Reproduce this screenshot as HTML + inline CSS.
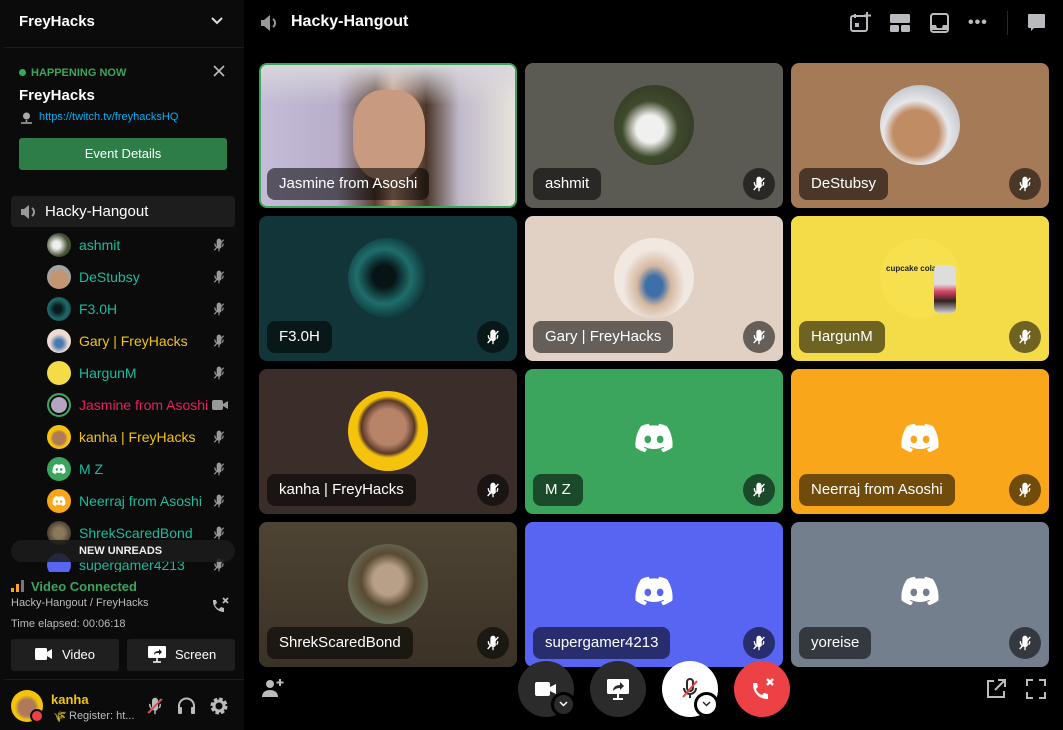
<!DOCTYPE html>
<html><head><meta charset="utf-8"><style>
*{box-sizing:border-box;margin:0;padding:0}
body{width:1063px;height:730px;background:#000;font-family:"Liberation Sans",sans-serif;color:#dcddde;position:relative;overflow:hidden}
.sb{position:absolute;left:0;top:0;width:244px;height:730px;background:#0b0b0b}
.abs{position:absolute}
.row{position:absolute;left:47px;height:24px;width:190px;font-size:14px;line-height:24px}
.row .av{position:absolute;left:0;top:0;width:24px;height:24px;border-radius:50%}
.row .nm{position:absolute;left:32px;top:0;white-space:nowrap}
.row svg{position:absolute;left:165px;top:5px}
.tile{position:absolute;width:258px;height:145px;border-radius:8px;overflow:hidden}
.lbl{position:absolute;left:8px;bottom:8px;height:32px;padding:0 12px;border-radius:8px;background:rgba(0,0,0,.55);color:#fff;font-size:15px;line-height:32px;white-space:nowrap}
.mute{position:absolute;right:8px;bottom:8px;width:32px;height:32px;border-radius:50%;background:rgba(0,0,0,.55)}
.mute svg{position:absolute;left:8px;top:8px}
.cav{position:absolute;left:89px;top:22px;width:80px;height:80px;border-radius:50%}
.dlogo{position:absolute;left:104px;top:53px}
.btn{position:absolute;width:56px;height:56px;border-radius:50%}
</style></head><body>
<svg width="0" height="0" style="position:absolute"><defs>
<symbol id="mm" viewBox="0 0 24 24"><path d="M9 5a3 3 0 0 1 6 0v5L9 16z M15 13v-1l-4 5a3 3 0 0 0 4-4z M19 10a7 7 0 0 1-1 4 M5 10a7 7 0 0 0 2 5 M12 18v4" stroke="currentColor" stroke-width="2" fill="currentColor" stroke-linecap="round"/><path d="M20 3L4 21" stroke="currentColor" stroke-width="2"/></symbol>
<symbol id="dc" viewBox="0 0 24 24"><path fill="#fff" d="M19.73 4.87a18.2 18.2 0 0 0-4.6-1.44c-.21.4-.4.8-.58 1.21-1.69-.25-3.4-.25-5.1 0-.18-.41-.37-.82-.59-1.2-1.6.27-3.14.75-4.6 1.43A19.04 19.04 0 0 0 .96 17.7a18.43 18.43 0 0 0 5.63 2.87c.46-.62.86-1.28 1.2-1.98-.65-.25-1.29-.55-1.9-.92.17-.12.32-.24.47-.37 3.58 1.7 7.7 1.7 11.28 0l.46.37c-.6.36-1.25.67-1.9.92.35.7.75 1.350 1.2 1.98 2.03-.63 3.94-1.6 5.64-2.87.47-4.87-.78-9.09-3.3-12.83ZM8.3 15.12c-1.1 0-2-1.02-2-2.27 0-1.24.88-2.26 2-2.26s2.02 1.02 2 2.26c0 1.25-.89 2.27-2 2.27Zm7.4 0c-1.1 0-2-1.02-2-2.27 0-1.24.88-2.26 2-2.260s2.02 1.02 2 2.26c0 1.25-.88 2.27-2 2.27Z"/></symbol>
</defs></svg>

<div class="sb">
 <div class="abs" style="left:19px;top:13px;font-size:15px;font-weight:bold;color:#fff">FreyHacks</div>
 <svg class="abs" style="left:210px;top:16px" width="14" height="10" viewBox="0 0 14 10"><path d="M2 2l5 5 5-5" stroke="#ddd" stroke-width="2" fill="none"/></svg>
 <div class="abs" style="left:4px;top:47px;width:240px;height:1px;background:#1c1c1c"></div>
 <div class="abs" style="left:19px;top:69px;width:7px;height:7px;border-radius:50%;background:#3ba55d"></div>
 <div class="abs" style="left:31px;top:67px;font-size:11px;font-weight:bold;color:#3ba55d">HAPPENING NOW</div>
 <svg class="abs" style="left:213px;top:65px" width="12" height="12" viewBox="0 0 12 12"><path d="M1 1l10 10M11 1L1 11" stroke="#bbb" stroke-width="1.6"/></svg>
 <div class="abs" style="left:19px;top:87px;font-size:15px;font-weight:bold;color:#fff">FreyHacks</div>
 <svg class="abs" style="left:20px;top:111px" width="13" height="13" viewBox="0 0 13 13"><circle cx="6.5" cy="5" r="3.5" fill="#aaa"/><path d="M6.5 9v2M1 12h11" stroke="#aaa" stroke-width="1.5"/></svg>
 <div class="abs" style="left:39px;top:111px;font-size:11px;color:#00aff4">https://twitch.tv/freyhacksHQ</div>
 <div class="abs" style="left:19px;top:138px;width:208px;height:32px;border-radius:3px;background:#2d7d46;color:#fff;font-size:13px;text-align:center;line-height:32px">Event Details</div>
 <div class="abs" style="left:11px;top:196px;width:224px;height:31px;border-radius:4px;background:#1d1d1d"></div>
 <svg class="abs" style="left:20px;top:204px" width="18" height="16" viewBox="0 0 18 16"><path d="M1 5h3l5-4v14l-5-4H1z" fill="#999"/><path d="M12 4a5 5 0 0 1 0 8" stroke="#999" stroke-width="2" fill="none"/></svg>
 <div class="abs" style="left:45px;top:203px;font-size:15px;color:#fff">Hacky-Hangout</div>

 <div class="row" style="top:233px"><div class="av" style="background:radial-gradient(circle at 40% 50%,#eee 20%,#445033 60%)"></div><div class="nm" style="color:#1abc9c">ashmit</div><svg width="14" height="14" style="color:#999"><use href="#mm"/></svg></div>
 <div class="row" style="top:265px"><div class="av" style="background:radial-gradient(circle at 50% 60%,#c59470 40%,#9aa 70%)"></div><div class="nm" style="color:#1abc9c">DeStubsy</div><svg width="14" height="14" style="color:#999"><use href="#mm"/></svg></div>
 <div class="row" style="top:297px"><div class="av" style="background:radial-gradient(circle at 45% 50%,#0a1a1c 20%,#1e6b6a 55%,#0b2b2e)"></div><div class="nm" style="color:#1abc9c">F3.0H</div><svg width="14" height="14" style="color:#999"><use href="#mm"/></svg></div>
 <div class="row" style="top:329px"><div class="av" style="background:radial-gradient(circle at 50% 60%,#4b79b0 20%,#eedbd0 50%)"></div><div class="nm" style="color:#f1c40f">Gary | FreyHacks</div><svg width="14" height="14" style="color:#999"><use href="#mm"/></svg></div>
 <div class="row" style="top:361px"><div class="av" style="background:#f4dc48"></div><div class="nm" style="color:#1abc9c">HargunM</div><svg width="14" height="14" style="color:#999"><use href="#mm"/></svg></div>
 <div class="row" style="top:393px"><div class="av" style="background:#b3a6c0;border:2px solid #3ba55d;box-shadow:inset 0 0 0 2px #0b0b0b"></div><div class="nm" style="color:#e91e63">Jasmine from Asoshi</div><svg width="16" height="12" viewBox="0 0 16 12" style="left:165px;top:6px"><rect x="0" y="1" width="11" height="10" rx="2" fill="#999"/><path d="M11 5l5-3v8l-5-3z" fill="#999"/></svg></div>
 <div class="row" style="top:425px"><div class="av" style="background:radial-gradient(circle at 50% 55%,#b07a58 35%,#f5c30c 50%)"></div><div class="nm" style="color:#f1c40f">kanha | FreyHacks</div><svg width="14" height="14" style="color:#999"><use href="#mm"/></svg></div>
 <div class="row" style="top:457px"><div class="av" style="background:#3ba55d"><svg width="14" height="14" style="left:5px;top:5px"><use href="#dc"/></svg></div><div class="nm" style="color:#1abc9c">M Z</div><svg width="14" height="14" style="color:#999"><use href="#mm"/></svg></div>
 <div class="row" style="top:489px"><div class="av" style="background:#faa61a"><svg width="14" height="14" style="left:5px;top:5px"><use href="#dc"/></svg></div><div class="nm" style="color:#1abc9c">Neerraj from Asoshi</div><svg width="14" height="14" style="color:#999"><use href="#mm"/></svg></div>
 <div class="row" style="top:521px"><div class="av" style="background:radial-gradient(circle,#8a7a5a 30%,#4a4030 70%)"></div><div class="nm" style="color:#1abc9c">ShrekScaredBond</div><svg width="14" height="14" style="color:#999"><use href="#mm"/></svg></div>
 <div class="row" style="top:553px;height:20px;overflow:hidden"><div class="av" style="background:#5865f2"></div><div class="nm" style="color:#1abc9c">supergamer4213</div><svg width="14" height="14" style="color:#999"><use href="#mm"/></svg></div>
 <div class="abs" style="left:11px;top:540px;width:224px;height:22px;border-radius:11px;background:rgba(28,28,28,.85);font-size:11px;font-weight:bold;color:#eee;line-height:22px;padding-left:68px">NEW UNREADS</div>
 <div class="abs" style="left:0;top:572px;width:244px;height:158px;background:#0b0b0b"></div>
 <svg class="abs" style="left:11px;top:580px" width="14" height="12" viewBox="0 0 14 12"><rect x="0" y="8" width="3" height="4" fill="#faa61a"/><rect x="5" y="4" width="3" height="8" fill="#faa61a"/><rect x="10" y="0" width="3" height="12" fill="#777"/></svg>
 <div class="abs" style="left:31px;top:579px;font-size:13px;font-weight:bold;color:#3ba55d">Video Connected</div>
 <div class="abs" style="left:11px;top:597px;font-size:11px;color:#b9bbbe">Hacky-Hangout / FreyHacks</div>
 <svg class="abs" style="left:210px;top:595px" width="20" height="20" viewBox="0 0 20 20"><path d="M3 6c0 6 5 11 11 11v-4l-3-1-2 2c-2-1-3-2-4-4l2-2-1-3H3z" fill="#bbb"/><path d="M13 3l5 5M18 3l-5 5" stroke="#bbb" stroke-width="1.8"/></svg>
 <div class="abs" style="left:11px;top:618px;font-size:11px;color:#b9bbbe">Time elapsed: 00:06:18</div>
 <div class="abs" style="left:11px;top:639px;width:108px;height:32px;border-radius:3px;background:#1f1f1f"></div>
 <svg class="abs" style="left:35px;top:647px" width="18" height="14" viewBox="0 0 18 14"><rect x="0" y="1" width="12" height="12" rx="1.5" fill="#fff"/><path d="M12 5l5-3v10l-5-3z" fill="#fff"/></svg>
 <div class="abs" style="left:62px;top:647px;font-size:13px;color:#fff">Video</div>
 <div class="abs" style="left:127px;top:639px;width:108px;height:32px;border-radius:3px;background:#1f1f1f"></div>
 <svg class="abs" style="left:148px;top:645px" width="18" height="18" viewBox="0 0 18 18"><rect x="0" y="1" width="18" height="12" rx="1" fill="#fff"/><path d="M9 13v4M5 17h8" stroke="#fff" stroke-width="1.5"/><path d="M6 10c0-3 2-4 5-4V4l3 3-3 3V8c-2 0-4 0-5 2z" fill="#1f1f1f"/></svg>
 <div class="abs" style="left:175px;top:647px;font-size:13px;color:#fff">Screen</div>
 <div class="abs" style="left:4px;top:679px;width:240px;height:1px;background:#1c1c1c"></div>
 <div class="abs" style="left:11px;top:690px;width:32px;height:32px;border-radius:50%;background:radial-gradient(circle at 50% 55%,#b07a58 35%,#f5c30c 52%)"></div>
 <div class="abs" style="left:30px;top:709px;width:14px;height:14px;border-radius:50%;background:#ed4245;border:2px solid #0b0b0b"></div>
 <div class="abs" style="left:51px;top:692px;font-size:13px;font-weight:bold;color:#f1c40f">kanha</div>
 <div class="abs" style="left:53px;top:710px;font-size:11px;color:#7ea04a">🌾</div>
 <div class="abs" style="left:69px;top:710px;font-size:11px;color:#b9bbbe">Register: ht...</div>
 <svg class="abs" style="left:146px;top:697px" width="18" height="18" style="color:#bbb"><use href="#mm" style="color:#bbb"/></svg>
 <svg class="abs" style="left:146px;top:697px" width="18" height="18" viewBox="0 0 18 18"><path d="M16 2L2 16" stroke="#ed4245" stroke-width="1.8"/></svg>
 <svg class="abs" style="left:177px;top:697px" width="19" height="18" viewBox="0 0 19 18"><path d="M2 14V9a7.5 7.5 0 0 1 15 0v5" stroke="#bbb" stroke-width="2" fill="none"/><rect x="1" y="10" width="4" height="7" rx="1" fill="#bbb"/><rect x="14" y="10" width="4" height="7" rx="1" fill="#bbb"/></svg>
 <svg class="abs" style="left:209px;top:696px" width="20" height="20" viewBox="0 0 20 20"><circle cx="10" cy="10" r="6.5" fill="none" stroke="#bbb" stroke-width="4" stroke-dasharray="3.2 1.9"/><circle cx="10" cy="10" r="5" fill="none" stroke="#bbb" stroke-width="3"/></svg>
</div>

<!-- header -->
<svg class="abs" style="left:260px;top:14px" width="20" height="18" viewBox="0 0 20 18"><path d="M1 6h3l6-5v16l-6-5H1z" fill="#999"/><path d="M13 5a5 5 0 0 1 0 8" stroke="#999" stroke-width="2" fill="none"/></svg>
<div class="abs" style="left:291px;top:13px;font-size:16px;font-weight:bold;color:#fff">Hacky-Hangout</div>
<svg class="abs" style="left:850px;top:12px" width="22" height="22" viewBox="0 0 22 22"><rect x="1" y="4" width="16" height="15" rx="2" fill="none" stroke="#b9bbbe" stroke-width="2"/><rect x="5" y="11" width="4" height="4" fill="#b9bbbe"/><path d="M5 2v4M17 0v7M14 3.5h7" stroke="#b9bbbe" stroke-width="2"/></svg>
<svg class="abs" style="left:890px;top:14px" width="20" height="18" viewBox="0 0 20 18"><rect x="0" y="0" width="20" height="9" rx="1.5" fill="#b9bbbe"/><rect x="0" y="11" width="9" height="7" rx="1.5" fill="#b9bbbe"/><rect x="11" y="11" width="9" height="7" rx="1.5" fill="#b9bbbe"/></svg>
<svg class="abs" style="left:930px;top:13px" width="19" height="20" viewBox="0 0 19 20"><rect x="1" y="1" width="17" height="18" rx="2.5" fill="none" stroke="#b9bbbe" stroke-width="2"/><path d="M1 12h5l1 3h5l1-3h5v5H1z" fill="#b9bbbe"/></svg>
<div class="abs" style="left:968px;top:14px;font-size:16px;color:#b9bbbe;letter-spacing:1px;font-weight:bold">•••</div>
<div class="abs" style="left:1007px;top:11px;width:1px;height:24px;background:#2a2a2a"></div>
<svg class="abs" style="left:1027px;top:13px" width="19" height="19" viewBox="0 0 19 19"><path d="M2 1h15a1 1 0 0 1 1 1v12a1 1 0 0 1-1 1H7l-3 3v-3H2a1 1 0 0 1-1-1V2a1 1 0 0 1 1-1z" fill="#b9bbbe"/></svg>

<!-- tiles row1 -->
<div class="tile" style="left:259px;top:63px;background:linear-gradient(90deg,#c4bcd8 0%,#b8aec9 30%,#5a3d30 45%,#c89c80 52%,#4a3528 65%,#c0b8c8 78%,#e8e4dc 100%);border:2px solid #3ba55d">
 <div class="abs" style="left:0;top:0;width:100%;height:40px;background:linear-gradient(#d8d6dc,rgba(216,214,220,0))"></div>
 <div class="abs" style="left:92px;top:25px;width:72px;height:90px;border-radius:40%;background:#c89a80"></div>
 <div class="lbl" style="left:6px;bottom:6px">Jasmine from Asoshi</div></div>
<div class="tile" style="left:525px;top:63px;background:#5b5a53"><div class="cav" style="background:radial-gradient(circle at 45% 55%,#f0f0ee 22%,#3f4a2c 45%,#2b3020)"></div><div class="lbl">ashmit</div><div class="mute"><svg width="16" height="16" style="color:#fff"><use href="#mm"/></svg></div></div>
<div class="tile" style="left:791px;top:63px;background:#a57a57"><div class="cav" style="background:radial-gradient(circle at 45% 60%,#c08c64 35%,#e7e7ea 50%,#9aa0a8)"></div><div class="lbl">DeStubsy</div><div class="mute"><svg width="16" height="16" style="color:#fff"><use href="#mm"/></svg></div></div>
<!-- row2 -->
<div class="tile" style="left:259px;top:216px;background:#123539"><div class="cav" style="background:radial-gradient(circle at 45% 48%,#061416 18%,#1f6e6c 45%,#0b2c30 75%)"></div><div class="lbl">F3.0H</div><div class="mute"><svg width="16" height="16" style="color:#fff"><use href="#mm"/></svg></div></div>
<div class="tile" style="left:525px;top:216px;background:#e1d1c5"><div class="cav" style="background:radial-gradient(ellipse at 50% 60%,#3f6fa8 15%,#d4b8a0 30%,#f2e8e2 55%)"></div><div class="lbl">Gary | FreyHacks</div><div class="mute"><svg width="16" height="16" style="color:#fff"><use href="#mm"/></svg></div></div>
<div class="tile" style="left:791px;top:216px;background:#f4db48"><div class="cav" style="background:#f7e04e"></div><div class="abs" style="left:95px;top:48px;font-size:8px;font-weight:bold;color:#222">cupcake cola</div><div class="abs" style="left:143px;top:49px;width:22px;height:48px;border-radius:5px;background:linear-gradient(#ddd 40%,#d46 55%,#322 75%,#ccc)"></div><div class="lbl">HargunM</div><div class="mute"><svg width="16" height="16" style="color:#fff"><use href="#mm"/></svg></div></div>
<!-- row3 -->
<div class="tile" style="left:259px;top:369px;background:#3b2d29"><div class="cav" style="background:radial-gradient(circle at 50% 45%,#b88468 30%,#5a3a2a 45%,#f5c30c 52%)"></div><div class="lbl">kanha | FreyHacks</div><div class="mute"><svg width="16" height="16" style="color:#fff"><use href="#mm"/></svg></div></div>
<div class="tile" style="left:525px;top:369px;background:#3ba55d"><svg class="dlogo" width="50" height="40" viewBox="0 0 24 24" style="left:104px;top:49px"><use href="#dc"/></svg><div class="lbl">M Z</div><div class="mute"><svg width="16" height="16" style="color:#fff"><use href="#mm"/></svg></div></div>
<div class="tile" style="left:791px;top:369px;background:#faa61a"><svg class="dlogo" width="50" height="40" viewBox="0 0 24 24" style="left:104px;top:49px"><use href="#dc"/></svg><div class="lbl">Neerraj from Asoshi</div><div class="mute"><svg width="16" height="16" style="color:#fff"><use href="#mm"/></svg></div></div>
<!-- row4 -->
<div class="tile" style="left:259px;top:522px;background:linear-gradient(#4e4434,#3a3226)"><div class="cav" style="background:radial-gradient(circle at 50% 45%,#b8a088 25%,#5a4a34 45%,#6a7058 70%)"></div><div class="lbl">ShrekScaredBond</div><div class="mute"><svg width="16" height="16" style="color:#fff"><use href="#mm"/></svg></div></div>
<div class="tile" style="left:525px;top:522px;background:#5865f2"><svg class="dlogo" width="50" height="40" viewBox="0 0 24 24" style="left:104px;top:49px"><use href="#dc"/></svg><div class="lbl">supergamer4213</div><div class="mute"><svg width="16" height="16" style="color:#fff"><use href="#mm"/></svg></div></div>
<div class="tile" style="left:791px;top:522px;background:#747f8d"><svg class="dlogo" width="50" height="40" viewBox="0 0 24 24" style="left:104px;top:49px"><use href="#dc"/></svg><div class="lbl">yoreise</div><div class="mute"><svg width="16" height="16" style="color:#fff"><use href="#mm"/></svg></div></div>

<!-- bottom controls -->
<svg class="abs" style="left:261px;top:678px" width="24" height="20" viewBox="0 0 24 20"><circle cx="9" cy="6" r="4" fill="#b9bbbe"/><path d="M1 19c0-5 4-7 8-7s8 2 8 7z" fill="#b9bbbe"/><path d="M19 1v7M15.5 4.5h7" stroke="#b9bbbe" stroke-width="2"/></svg>
<div class="btn" style="left:518px;top:661px;background:#2b2b2b"></div>
<svg class="abs" style="left:535px;top:681px" width="22" height="16" viewBox="0 0 22 16"><rect x="0" y="1" width="15" height="14" rx="2" fill="#fff"/><path d="M15 6l6-3v10l-6-3z" fill="#fff"/></svg>
<div class="abs" style="left:551px;top:692px;width:25px;height:25px;border-radius:50%;background:#2b2b2b;border:3px solid #000"></div>
<svg class="abs" style="left:558px;top:700px" width="11" height="8" viewBox="0 0 11 8"><path d="M2 2l3.5 3.5L9 2" stroke="#fff" stroke-width="1.5" fill="none"/></svg>
<div class="btn" style="left:590px;top:661px;background:#2b2b2b"></div>
<svg class="abs" style="left:606px;top:677px" width="24" height="24" viewBox="0 0 24 24"><rect x="1" y="2" width="22" height="15" rx="1.5" fill="#fff"/><path d="M12 17v5M7 22h10" stroke="#fff" stroke-width="2"/><path d="M7 14c0-4 3-6 7-6V5l4 4-4 4v-2c-3 0-5 1-7 3z" fill="#2b2b2b"/></svg>
<div class="btn" style="left:662px;top:661px;background:#fff"></div>
<svg class="abs" style="left:678px;top:677px" width="24" height="24" viewBox="0 0 24 24"><path d="M9 5a3 3 0 0 1 6 0v6a3 3 0 0 1-6 0z M6 11a6 6 0 0 0 12 0 M12 17v4" stroke="#2b2b2b" stroke-width="2" fill="none"/><path d="M19 4L5 20" stroke="#ed4245" stroke-width="2"/></svg>
<div class="abs" style="left:694px;top:692px;width:25px;height:25px;border-radius:50%;background:#fff;border:3px solid #000"></div>
<svg class="abs" style="left:701px;top:700px" width="11" height="8" viewBox="0 0 11 8"><path d="M2 2l3.5 3.5L9 2" stroke="#2b2b2b" stroke-width="1.5" fill="none"/></svg>
<div class="btn" style="left:734px;top:661px;background:#ed4245"></div>
<svg class="abs" style="left:750px;top:676px" width="26" height="26" viewBox="0 0 26 26"><path d="M3 8c0 9 6 15 15 15v-5l-4-1-2 2c-3-1-5-3-6-6l2-2-1-4H3z" fill="#fff"/><path d="M17 3l6 6M23 3l-6 6" stroke="#fff" stroke-width="2.4"/></svg>
<svg class="abs" style="left:986px;top:679px" width="20" height="20" viewBox="0 0 20 20"><path d="M8 2H2v16h16v-6" stroke="#b9bbbe" stroke-width="2" fill="none"/><path d="M12 1h7v7M19 1L9 11" stroke="#b9bbbe" stroke-width="2" fill="none"/></svg>
<svg class="abs" style="left:1026px;top:679px" width="20" height="20" viewBox="0 0 20 20"><path d="M1 7V1h6M13 1h6v6M19 13v6h-6M7 19H1v-6" stroke="#b9bbbe" stroke-width="2" fill="none"/></svg>
</body></html>
